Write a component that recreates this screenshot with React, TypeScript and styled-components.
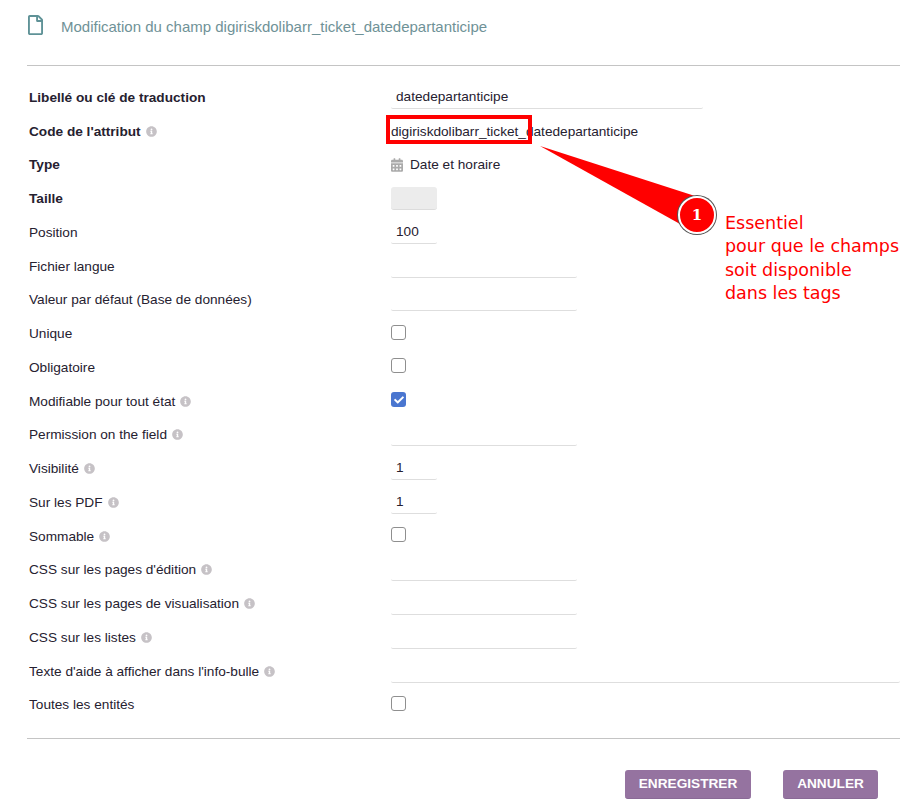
import React from 'react';
import styled, { createGlobalStyle } from 'styled-components';
import { FaCalendarAlt, FaCheck, FaInfoCircle, FaRegFile } from 'react-icons/fa';

const GlobalStyle = createGlobalStyle`
  html, body {
    margin: 0;
    background: #fff;
    font-family: "Liberation Sans", Arial, sans-serif;
    font-size: 13.65px;
    color: #262130;
  }
`;

const Page = styled.div`
  position: relative;
  width: 900px;
  height: 807px;
  overflow: hidden;
  padding-left: 27px;
  box-sizing: border-box;
`;

const Header = styled.div`
  display: flex;
  align-items: center;
  gap: 18px;
  height: 66px;
  padding: 0 0 12px 1px;
  box-sizing: border-box;
  border-bottom: 1px solid #c4c4c4;
  color: #6f9297;
  font-size: 15px;
  svg {
    width: 15px;
    height: 20px;
    color: #5f9297;
    margin-top: -3px;
  }
`;

const Form = styled.div`
  padding-top: 14.6px;
`;

const Row = styled.div`
  display: flex;
  align-items: center;
  height: 33.75px;
`;

const Label = styled.div<{ $strong?: boolean }>`
  width: 364px;
  padding-left: 2px;
  box-sizing: border-box;
  display: flex;
  align-items: center;
  gap: 5px;
  font-weight: ${props => (props.$strong ? 700 : 400)};
  white-space: nowrap;
  svg {
    width: 11px;
    height: 11px;
    color: #c6c2c6;
  }
`;

const Field = styled.div<{ $width: number }>`
  width: ${props => props.$width}px;
  height: 23px;
  line-height: 22px;
  padding-left: 5px;
  box-sizing: border-box;
  border-bottom: 1px solid #dedede;
  border-radius: 2px;
`;

const PlainValue = styled.div`
  display: flex;
  align-items: center;
  gap: 7px;
  svg {
    width: 12px;
    height: 14px;
    color: #aaa;
  }
`;

const DisabledField = styled.div`
  width: 46px;
  height: 23px;
  background: #ececec;
  border-radius: 3px;
  border-bottom: 1px solid #dcdcdc;
  box-sizing: border-box;
`;

const Checkbox = styled.div<{ $checked?: boolean }>`
  width: 15px;
  height: 15px;
  margin-top: -3px;
  box-sizing: border-box;
  border-radius: 3px;
  border: ${props => (props.$checked ? 'none' : '1px solid #8f8f8f')};
  background: ${props => (props.$checked ? '#4a76d0' : '#fff')};
  display: flex;
  align-items: center;
  justify-content: center;
  color: #fff;
  svg {
    width: 10px;
    height: 10px;
  }
`;

const Divider = styled.div`
  border-top: 1px solid #c4c4c4;
  margin-top: 16.5px;
`;

const Actions = styled.div`
  display: flex;
  justify-content: flex-end;
  gap: 32px;
  padding: 31px 22px 0 0;
`;

const Button = styled.div<{ $width: number }>`
  width: ${props => props.$width}px;
  height: 29px;
  line-height: 28px;
  text-align: center;
  background: #9573a0;
  border-bottom: 1px solid #8a6a96;
  box-sizing: border-box;
  border-radius: 3px;
  color: #fff;
  font-weight: 700;
`;

const Highlight = styled.div`
  position: absolute;
  left: 386px;
  top: 115px;
  width: 146px;
  height: 29px;
  box-sizing: border-box;
  border: 4px solid #f00;
`;

const CalloutTail = styled.svg`
  position: absolute;
  left: 530px;
  top: 140px;
`;

const Badge = styled.div`
  position: absolute;
  left: 678px;
  top: 196px;
  width: 38px;
  height: 38px;
  box-sizing: border-box;
  border-radius: 50%;
  background: #f00;
  border: 2px solid #fff;
  box-shadow: 0 0 0 1px #555;
  color: #fff;
  font-family: "DejaVu Serif", serif;
  font-weight: 700;
  font-size: 15px;
  line-height: 34px;
  text-align: center;
`;

const Note = styled.div`
  position: absolute;
  left: 725px;
  top: 212px;
  color: #f00;
  font-family: "DejaVu Sans", Verdana, sans-serif;
  font-size: 17.5px;
  line-height: 23.3px;
  white-space: nowrap;
`;

type RowDef =
  | { label: string; strong?: boolean; info?: boolean; kind: 'field'; width: number; value?: string }
  | { label: string; strong?: boolean; info?: boolean; kind: 'check'; checked?: boolean }
  | { label: string; strong?: boolean; info?: boolean; kind: 'plain'; value: string }
  | { label: string; strong?: boolean; info?: boolean; kind: 'type' }
  | { label: string; strong?: boolean; info?: boolean; kind: 'disabled' };

const rows: RowDef[] = [
  { label: 'Libellé ou clé de traduction', strong: true, kind: 'field', width: 312, value: 'datedepartanticipe' },
  { label: "Code de l'attribut", strong: true, info: true, kind: 'plain', value: 'digiriskdolibarr_ticket_datedepartanticipe' },
  { label: 'Type', strong: true, kind: 'type' },
  { label: 'Taille', strong: true, kind: 'disabled' },
  { label: 'Position', kind: 'field', width: 46, value: '100' },
  { label: 'Fichier langue', kind: 'field', width: 186 },
  { label: 'Valeur par défaut (Base de données)', kind: 'field', width: 186 },
  { label: 'Unique', kind: 'check' },
  { label: 'Obligatoire', kind: 'check' },
  { label: 'Modifiable pour tout état', info: true, kind: 'check', checked: true },
  { label: 'Permission on the field', info: true, kind: 'field', width: 186 },
  { label: 'Visibilité', info: true, kind: 'field', width: 46, value: '1' },
  { label: 'Sur les PDF', info: true, kind: 'field', width: 46, value: '1' },
  { label: 'Sommable', info: true, kind: 'check' },
  { label: "CSS sur les pages d'édition", info: true, kind: 'field', width: 186 },
  { label: 'CSS sur les pages de visualisation', info: true, kind: 'field', width: 186 },
  { label: 'CSS sur les listes', info: true, kind: 'field', width: 186 },
  { label: "Texte d'aide à afficher dans l'info-bulle", info: true, kind: 'field', width: 509 },
  { label: 'Toutes les entités', kind: 'check' },
];

const renderValue = (row: RowDef) => {
  switch (row.kind) {
    case 'field':
      return <Field $width={row.width}>{row.value}</Field>;
    case 'check':
      return <Checkbox $checked={row.checked}>{row.checked && <FaCheck />}</Checkbox>;
    case 'plain':
      return <PlainValue>{row.value}</PlainValue>;
    case 'type':
      return (
        <PlainValue>
          <FaCalendarAlt />
          Date et horaire
        </PlainValue>
      );
    default:
      return <DisabledField />;
  }
};

const App: React.FC = () => (
  <Page>
    <GlobalStyle />
    <Header>
      <FaRegFile />
      Modification du champ digiriskdolibarr_ticket_datedepartanticipe
    </Header>
    <Form>
      {rows.map(row => (
        <Row key={row.label}>
          <Label $strong={row.strong}>
            {row.label}
            {row.info && <FaInfoCircle />}
          </Label>
          {renderValue(row)}
        </Row>
      ))}
    </Form>
    <Divider />
    <Actions>
      <Button $width={126}>ENREGISTRER</Button>
      <Button $width={95}>ANNULER</Button>
    </Actions>

    <Highlight />
    <CalloutTail width="170" height="90" viewBox="0 0 170 90">
      <polygon points="10,6 165,56 150,84" fill="#f00" />
    </CalloutTail>
    <Badge>1</Badge>
    <Note>
      Essentiel
      <br />
      pour que le champs
      <br />
      soit disponible
      <br />
      dans les tags
    </Note>
  </Page>
);

export default App;
